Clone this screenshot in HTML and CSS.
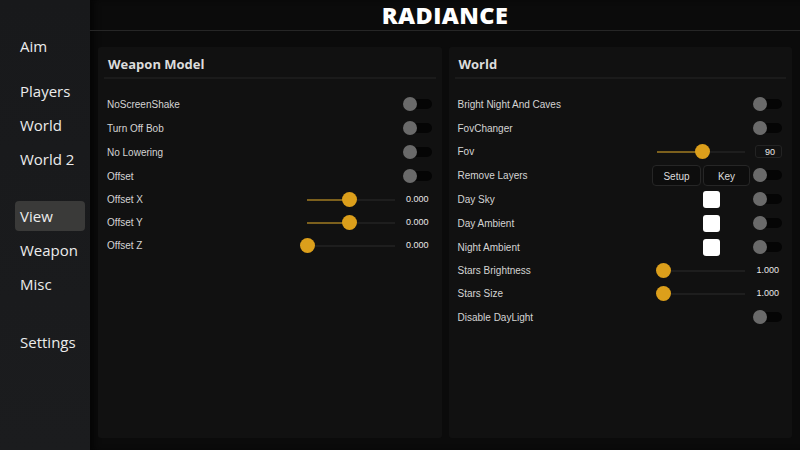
FILE: index.html
```html
<!DOCTYPE html>
<html lang="en">
<head>
    <meta charset="UTF-8">
    <title>Radiance</title>
    <link rel="stylesheet" href="styles.css">
</head>
<body>

<div class="app">
    <nav class="sidebar">
        <div class="group">
            <div class="nav-item">Aim</div>
        </div>
        <div class="group g1">
            <div class="nav-item">Players</div>
            <div class="nav-item">World</div>
            <div class="nav-item">World 2</div>
        </div>
        <div class="group g2">
            <div class="nav-item active">View</div>
            <div class="nav-item">Weapon</div>
            <div class="nav-item">Misc</div>
        </div>
        <div class="group g3">
            <div class="nav-item">Settings</div>
        </div>
    </nav>

    <main class="main">
        <header class="topbar">RADIANCE</header>

        <div class="panels">
            <section class="panel">
                <h2 class="panel-title">Weapon Model</h2>
                <div class="rows">
                    <div class="row"><span class="label">NoScreenShake</span><span class="toggle"><i></i></span></div>
                    <div class="row"><span class="label">Turn Off Bob</span><span class="toggle"><i></i></span></div>
                    <div class="row"><span class="label">No Lowering</span><span class="toggle"><i></i></span></div>
                    <div class="row"><span class="label">Offset</span><span class="toggle"><i></i></span></div>
                    <div class="row slide">
                        <span class="label">Offset X</span>
                        <span class="slider"><b style="width: 48%"></b><i style="left: 48%"></i></span>
                        <span class="value">0.000</span>
                    </div>
                    <div class="row slide">
                        <span class="label">Offset Y</span>
                        <span class="slider"><b style="width: 48%"></b><i style="left: 48%"></i></span>
                        <span class="value">0.000</span>
                    </div>
                    <div class="row slide">
                        <span class="label">Offset Z</span>
                        <span class="slider"><b style="width: 0%"></b><i style="left: 0%"></i></span>
                        <span class="value">0.000</span>
                    </div>
                </div>
            </section>

            <section class="panel">
                <h2 class="panel-title">World</h2>
                <div class="rows">
                    <div class="row"><span class="label">Bright Night And Caves</span><span class="toggle"><i></i></span></div>
                    <div class="row"><span class="label">FovChanger</span><span class="toggle"><i></i></span></div>
                    <div class="row slide">
                        <span class="label">Fov</span>
                        <span class="slider"><b style="width: 51%"></b><i style="left: 51%"></i></span>
                        <span class="value boxed">90</span>
                    </div>
                    <div class="row">
                        <span class="label">Remove Layers</span>
                        <span class="btn setup">Setup</span>
                        <span class="btn key">Key</span>
                        <span class="toggle"><i></i></span>
                    </div>
                    <div class="row"><span class="label">Day Sky</span><span class="swatch"></span><span class="toggle"><i></i></span></div>
                    <div class="row"><span class="label">Day Ambient</span><span class="swatch"></span><span class="toggle"><i></i></span></div>
                    <div class="row"><span class="label">Night Ambient</span><span class="swatch"></span><span class="toggle"><i></i></span></div>
                    <div class="row slide">
                        <span class="label">Stars Brightness</span>
                        <span class="slider"><b style="width: 7%"></b><i style="left: 7%"></i></span>
                        <span class="value">1.000</span>
                    </div>
                    <div class="row slide">
                        <span class="label">Stars Size</span>
                        <span class="slider"><b style="width: 7%"></b><i style="left: 7%"></i></span>
                        <span class="value">1.000</span>
                    </div>
                    <div class="row"><span class="label">Disable DayLight</span><span class="toggle"><i></i></span></div>
                </div>
            </section>
        </div>
    </main>
</div>

</body>
</html>
```

FILE: styles.css
```css
body {
    margin: 0;
    background-color: #0a0a0a;
    font-family: "Open Sans", sans-serif;
    color: #e6e6e6;
}
.app {
    display: flex;
    width: 800px;
    height: 450px;
    overflow: hidden;
}

/* sidebar */
.sidebar {
    width: 90px;
    flex-shrink: 0;
    padding-top: 31px;
    box-sizing: border-box;
    background: linear-gradient(#18191b, #1b1c1e);
}
.nav-item {
    height: 30px;
    line-height: 30px;
    margin: 0 5px 4px 15px;
    padding-left: 5px;
    border-radius: 4px;
    font-size: 15px;
    font-weight: 500;
    color: #ececec;
}
.nav-item.active {
    background-color: #3a3a39;
}
.g1 { margin-top: 15px; }
.g2 { margin-top: 27px; }
.g3 { margin-top: 28px; }

/* main */
.main {
    flex: 1;
    display: flex;
    flex-direction: column;
    background-color: #0b0b0b;
    box-shadow: inset 6px 0 6px -2px #050505;
}
.topbar {
    height: 30px;
    line-height: 31px;
    text-align: center;
    font-size: 23.5px;
    font-weight: 800;
    letter-spacing: 0.4px;
    color: #ffffff;
    border-bottom: 1px solid #262626;
}
.panels {
    flex: 1;
    display: flex;
    gap: 7px;
    padding: 16px 8px 12px 8px;
}
.panel {
    flex: 1;
    background-color: #111111;
    border-radius: 3px;
    padding: 0 10px 0 9px;
}
.panel-title {
    margin: 0 -4px 0 -3px;
    padding: 8px 0 0 4px;
    height: 22px;
    font-size: 13px;
    font-weight: 700;
    color: #dcdcdc;
    border-bottom: 2px solid #1b1b1b;
}
.rows {
    padding-top: 13px;
}

/* rows */
.row {
    display: flex;
    align-items: center;
    height: 24px;
    font-family: "Liberation Sans", sans-serif;
    font-size: 10px;
    color: #d4d4d4;
}
.row.slide {
    height: 23px;
}
.label {
    flex: 1;
}
.toggle {
    position: relative;
    width: 28px;
    height: 10px;
    border-radius: 5px;
    background-color: #050505;
}
.toggle i {
    position: absolute;
    left: -1px;
    top: -2px;
    width: 14px;
    height: 14px;
    border-radius: 50%;
    background-color: #6a6a6a;
}
.slider {
    position: relative;
    width: 88px;
    height: 2px;
    margin-right: 10px;
    background-color: #1e1e1e;
}
.slider b {
    position: absolute;
    left: 0;
    top: 0;
    height: 2px;
    background-color: #7c601d;
}
.slider i {
    position: absolute;
    top: -7px;
    width: 15px;
    height: 15px;
    margin-left: -7px;
    border-radius: 50%;
    background-color: #dc9f1b;
}
.value {
    width: 27px;
    height: 13px;
    line-height: 13px;
    box-sizing: border-box;
    padding-right: 3px;
    text-align: right;
    font-size: 9px;
    color: #e8e8e8;
    border-radius: 3px;
}
.value.boxed {
    border: 1px solid #232323;
    padding-right: 6px;
}
.btn {
    height: 21px;
    line-height: 21px;
    box-sizing: border-box;
    border: 1px solid #262626;
    border-radius: 4px;
    background-color: #0d0d0d;
    text-align: center;
    color: #dcdcdc;
}
.btn.setup {
    width: 49px;
    margin-right: 2px;
}
.btn.key {
    width: 47px;
    margin-right: 4px;
}
.swatch {
    width: 17px;
    height: 17px;
    border-radius: 3px;
    background-color: #ffffff;
    margin-right: 34px;
}
```
